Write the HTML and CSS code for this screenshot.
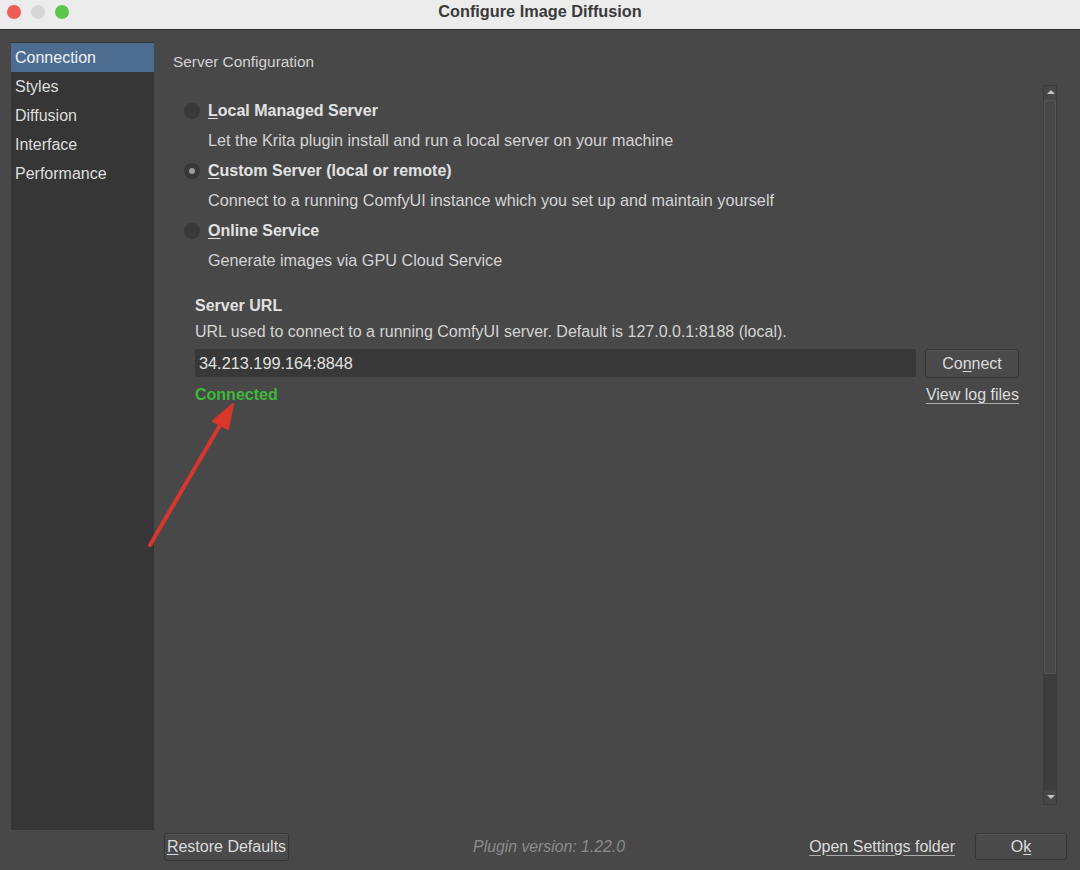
FILE: index.html
```html
<!DOCTYPE html>
<html>
<head>
<meta charset="utf-8">
<link rel="stylesheet" href="styles.css">
</head>
<body>
<div class="titlebar">
  <div class="lights">
    <span class="light red"></span>
    <span class="light gray"></span>
    <span class="light green"></span>
  </div>
  <div class="title">Configure Image Diffusion</div>
</div>
<div class="window">
  <div class="top">
    <nav class="sidebar">
      <div class="nav-item selected">Connection</div>
      <div class="nav-item">Styles</div>
      <div class="nav-item">Diffusion</div>
      <div class="nav-item">Interface</div>
      <div class="nav-item">Performance</div>
    </nav>
    <main class="main">
      <div class="header">Server Configuration</div>
      <div class="scroll">
        <div class="content">
          <div class="radio-row"><span class="radio"></span><span class="radio-label"><u>L</u>ocal Managed Server</span></div>
          <div class="radio-desc">Let the Krita plugin install and run a local server on your machine</div>
          <div class="radio-row"><span class="radio checked"></span><span class="radio-label"><u>C</u>ustom Server (local or remote)</span></div>
          <div class="radio-desc">Connect to a running ComfyUI instance which you set up and maintain yourself</div>
          <div class="radio-row"><span class="radio"></span><span class="radio-label"><u>O</u>nline Service</span></div>
          <div class="radio-desc">Generate images via GPU Cloud Service</div>

          <div class="server">
            <div class="server-title">Server URL</div>
            <div class="server-desc">URL used to connect to a running ComfyUI server. Default is 127.0.0.1:8188 (local).</div>
            <div class="url-row">
              <div class="input">34.213.199.164:8848</div>
              <button class="btn connect">Co<u>n</u>nect</button>
            </div>
            <div class="status-row">
              <span class="connected">Connected</span>
              <span class="link">View log files</span>
            </div>
          </div>
        </div>
        <div class="scrollbar">
          <div class="sb-arrow up"></div>
          <div class="sb-thumb"></div>
          <div class="sb-track"></div>
          <div class="sb-arrow down"></div>
        </div>
      </div>
    </main>
  </div>
  <div class="footer">
    <button class="btn restore"><u>R</u>estore Defaults</button>
    <div class="version">Plugin version: 1.22.0</div>
    <span class="link settings">Open Settings folder</span>
    <button class="btn ok">O<u>k</u></button>
  </div>
</div>
<svg class="arrow" width="1080" height="870" viewBox="0 0 1080 870">
  <line x1="150" y1="545" x2="223" y2="420" stroke="#d8372c" stroke-width="4" stroke-linecap="round"/>
  <polygon points="233,404 213,421 228,429" fill="#d8372c" stroke="#d8372c" stroke-width="2" stroke-linejoin="round"/>
</svg>
</body>
</html>
```
FILE: styles.css
```css
* { box-sizing: border-box; }
html, body { margin: 0; padding: 0; }
body {
  width: 1080px;
  height: 870px;
  overflow: hidden;
  background: #484848;
  font-family: "Liberation Sans", Arial, sans-serif;
  color: #dcdcdc;
  position: relative;
}
u { text-decoration: underline; text-underline-offset: 2px; }

.titlebar {
  height: 30px;
  background: #ececec;
  border-bottom: 1px solid #2b2b2b;
  display: flex;
  align-items: center;
  position: relative;
}
.lights {
  display: flex;
  gap: 10px;
  padding-left: 7px;
  position: absolute;
  left: 0; top: 5px;
}
.light { width: 14px; height: 14px; border-radius: 50%; display: block; }
.light.red { background: #ee5b55; }
.light.gray { background: #d6d6d6; }
.light.green { background: #5ac84c; }
.title {
  flex: 1;
  text-align: center;
  font-weight: bold;
  font-size: 16.3px;
  color: #3a3a3a;
  padding-bottom: 6px;
}

.window { display: flex; flex-direction: column; }
.top { display: flex; padding: 12px 0 0 11px; height: 800px; }
.sidebar {
  width: 143px;
  height: 788px;
  background: #363636;
  padding-top: 1px;
}
.nav-item {
  height: 29px;
  line-height: 29px;
  font-size: 16px;
  padding-left: 4px;
  color: #dedede;
}
.nav-item.selected { background: #4d6d90; color: #eef2f6; }

.main { flex: 1; display: flex; flex-direction: column; }
.header {
  padding: 11px 0 0 19px;
  line-height: 18px;
  font-size: 15.4px;
  color: #d2d2d2;
}
.scroll {
  display: flex;
  margin-top: 14px;
  height: 720px;
}
.content { flex: 1; padding: 11px 24px 0 19px; }
.radio-row {
  height: 30px;
  display: flex;
  align-items: center;
}
.radio {
  width: 16px; height: 16px;
  border-radius: 50%;
  background: #383838;
  margin-left: 11px;
  margin-right: 8px;
  position: relative;
}
.radio.checked::after {
  content: "";
  position: absolute;
  left: 5px; top: 5px;
  width: 6px; height: 6px;
  border-radius: 50%;
  background: #9a9a9a;
}
.radio-label { font-weight: bold; font-size: 16px; color: #e2e2e2; }
.radio-desc {
  height: 30px;
  line-height: 29px;
  font-size: 16.2px;
  padding-left: 35px;
  color: #d4d4d4;
}

.server { padding-left: 22px; margin-top: 19px; }
.server-title { line-height: 22px; font-weight: bold; font-size: 16px; color: #e0e0e0; }
.server-desc { line-height: 22px; margin-top: 4px; font-size: 16px; color: #d4d4d4; }
.url-row { display: flex; margin-top: 6px; gap: 9px; }
.input {
  flex: 1;
  height: 28px;
  line-height: 28px;
  background: #383838;
  border-radius: 3px;
  padding-left: 4px;
  font-size: 16.3px;
  color: #e0e0e0;
}
.btn {
  font-family: inherit;
  font-size: 16px;
  color: #dcdcdc;
  background: #4a4a4a;
  border: 1px solid #363636;
  border-radius: 3px;
  box-shadow: inset 0 1px 0 #555;
  padding: 0;
}
.connect { width: 94px; height: 29px; }
.status-row {
  display: flex;
  justify-content: space-between;
  margin-top: 6px;
  line-height: 22px;
}
.connected { font-weight: bold; font-size: 16px; color: #3db83a; }
.link {
  font-size: 16px;
  color: #dcdcdc;
  text-decoration: underline;
  text-underline-offset: 3px;
  text-decoration-color: #aaa;
}

.scrollbar {
  width: 14px;
  margin-right: 23px;
  display: flex;
  flex-direction: column;
  border: 1px solid #3c3c3c;
}
.sb-arrow { height: 14px; position: relative; background: #474747; }
.sb-arrow.up::after, .sb-arrow.down::after {
  content: "";
  position: absolute;
  left: 3px;
  border-left: 4px solid transparent;
  border-right: 4px solid transparent;
}
.sb-arrow.up::after { top: 4px; border-bottom: 4px solid #c4c4c4; }
.sb-arrow.down::after { top: 5px; border-top: 4px solid #c4c4c4; }
.sb-thumb { height: 574px; background: #474747; border: 1px solid #555; border-radius: 2px; }
.sb-track { flex: 1; background: #3d3d3d; }

.footer {
  display: flex;
  align-items: center;
  padding: 4px 13px 0 164px;
  height: 29px;
}
.restore { width: 125px; height: 28px; }
.version {
  flex: 1;
  text-align: center;
  font-style: italic;
  font-size: 15.8px;
  color: #8c8c8c;
}
.settings { margin-right: 20px; }
.ok { width: 92px; height: 27px; }

.arrow { position: absolute; left: 0; top: 0; pointer-events: none; }
```
